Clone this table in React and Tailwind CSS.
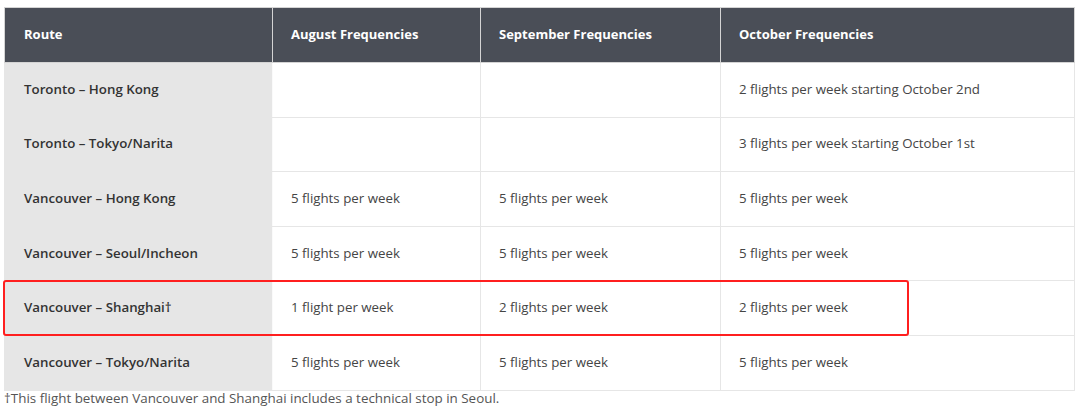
import React from "react";

const rows = [
  ["Toronto – Hong Kong", "", "", "2 flights per week starting October 2nd"],
  ["Toronto – Tokyo/Narita", "", "", "3 flights per week starting October 1st"],
  ["Vancouver – Hong Kong", "5 flights per week", "5 flights per week", "5 flights per week"],
  ["Vancouver – Seoul/Incheon", "5 flights per week", "5 flights per week", "5 flights per week"],
  ["Vancouver – Shanghai†", "1 flight per week", "2 flights per week", "2 flights per week"],
  ["Vancouver – Tokyo/Narita", "5 flights per week", "5 flights per week", "5 flights per week"],
];

export default function App() {
  return (
    <div
      className="w-[1080px] h-[409px] bg-white overflow-hidden pt-[7px] pl-[4px]"
      style={{ fontFamily: '"Open Sans", "Noto Sans", sans-serif' }}
    >
      <div className="relative w-[1070px]">
        <table className="w-[1070px] border-collapse table-fixed text-[13.3px]">
          <colgroup>
            <col className="w-[268px]" />
            <col className="w-[208px]" />
            <col className="w-[240px]" />
            <col className="w-[354px]" />
          </colgroup>
          <thead>
            <tr className="h-[55px] bg-[#4a4e57] text-white">
              {["Route", "August Frequencies", "September Frequencies", "October Frequencies"].map((h, i) => (
                <th
                  key={h}
                  className={
                    "text-left text-[13px] font-bold border border-[#d4d4d4] align-middle " +
                    (i === 0 ? "pl-[19px]" : "pl-[18px]")
                  }
                >
                  {h}
                </th>
              ))}
            </tr>
          </thead>
          <tbody>
            {rows.map((r, i) => (
              <tr key={i} className="h-[54.6px]">
                <td className="bg-[#e6e6e6] text-[#333] font-semibold pl-[19px] border border-[#e6e6e6] border-r-[#fafafa] align-middle">
                  {r[0]}
                </td>
                {r.slice(1).map((c, j) => (
                  <td
                    key={j}
                    className="text-[#454545] pl-[18px] border border-[#e6e6e6] align-middle"
                  >
                    {c}
                  </td>
                ))}
              </tr>
            ))}
          </tbody>
        </table>
        <div className="absolute left-[-1px] top-[273px] w-[906px] h-[56px] border-2 border-[#ff1f1f] rounded-[3px] pointer-events-none" />
      </div>
      <p className="text-[13.4px] text-[#555] leading-[18px] mt-[-2px]">
        †This flight between Vancouver and Shanghai includes a technical stop in Seoul.
      </p>
    </div>
  );
}
